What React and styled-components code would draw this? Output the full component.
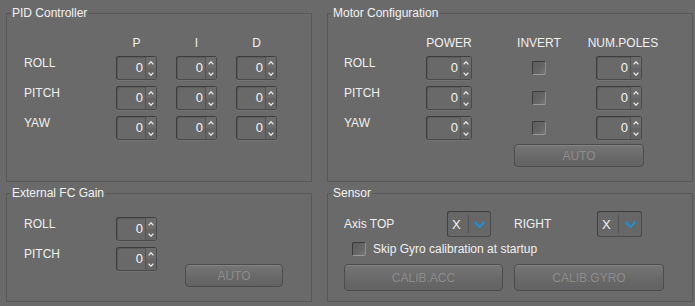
import React from "react";
import styled, { createGlobalStyle } from "styled-components";

const GlobalStyle = createGlobalStyle`
  html, body {
    margin: 0;
    padding: 0;
    background: #6a6a6a;
  }
  body {
    font-family: "Liberation Sans", Arial, sans-serif;
    font-size: 12px;
    color: #f0f0f0;
  }
`;

const Page = styled.div`
  display: grid;
  grid-template-columns: 306px 366px;
  grid-template-rows: 176px 116px;
  column-gap: 15px;
  row-gap: 4px;
  box-sizing: border-box;
  width: 695px;
  height: 306px;
  padding: 6px 0 0 6px;
  background: #6a6a6a;
`;

const Group = styled.fieldset`
  box-sizing: border-box;
  min-width: 0;
  height: 100%;
  margin: 0;
  padding: 0;
  border: 1px solid #585858;
`;

const Legend = styled.legend`
  margin-left: 4px;
  padding: 0 1px;
  font-size: 12px;
  line-height: 14px;
  color: #f2f2f2;
`;

const FormGrid = styled.div`
  display: grid;
  grid-template-columns: ${(p) => p.$columns};
  grid-auto-rows: 24px;
  grid-template-rows: ${(p) => (p.$header ? "14px" : "24px")};
  row-gap: 6px;
  padding: ${(p) => p.$pad};
`;

const RowLabel = styled.div`
  grid-column: 1;
  align-self: start;
  line-height: 14px;
  color: #f0f0f0;
`;

const ColHeader = styled.div`
  grid-column: ${(p) => p.$col};
  justify-self: center;
  line-height: 14px;
  white-space: nowrap;
  color: #f0f0f0;
`;

const Cell = styled.div`
  grid-column: ${(p) => p.$col};
  display: flex;
  align-items: center;
  justify-content: ${(p) => (p.$center ? "center" : "flex-start")};
`;

const SpinFrame = styled.div`
  box-sizing: border-box;
  display: flex;
  width: ${(p) => p.$width}px;
  height: 24px;
  border: 1px solid #3e3e3e;
  border-right-color: #4a4a4a;
  border-bottom-color: #4a4a4a;
  border-radius: 3px;
  background: #696969;
  box-shadow: inset 1px 1px 0 rgba(0, 0, 0, 0.12), 0 1px 0 rgba(255, 255, 255, 0.06);
`;

const SpinValue = styled.div`
  flex: 1;
  padding-right: 2px;
  line-height: 22px;
  text-align: right;
  font-size: 13px;
  color: #f4f4f4;
`;

const SpinArrows = styled.div`
  display: flex;
  flex-direction: column;
  width: 10px;
  border-left: 1px solid #555;
`;

const SpinArrow = styled.div`
  flex: 1;
  display: flex;
  align-items: center;
  justify-content: center;
  background: ${(p) => (p.$down ? "#656565" : "#6c6c6c")};
`;

const Chevron = ({ up, color = "#e8e8e8", w = 6, h = 4, sw = 1.3 }) => (
  <svg width={w} height={h} viewBox={`0 0 ${w} ${h}`}>
    <polyline
      points={
        up
          ? `0.6,${h - 0.6} ${w / 2},0.8 ${w - 0.6},${h - 0.6}`
          : `0.6,0.6 ${w / 2},${h - 0.8} ${w - 0.6},0.6`
      }
      fill="none"
      stroke={color}
      strokeWidth={sw}
    />
  </svg>
);

const SpinBox = ({ value = 0, width = 41 }) => (
  <SpinFrame $width={width}>
    <SpinValue>{value}</SpinValue>
    <SpinArrows>
      <SpinArrow>
        <Chevron up />
      </SpinArrow>
      <SpinArrow $down>
        <Chevron />
      </SpinArrow>
    </SpinArrows>
  </SpinFrame>
);

const CheckBox = styled.div`
  box-sizing: border-box;
  width: 14px;
  height: 14px;
  border: 1px solid #3c3c3c;
  border-right-color: #8e8e8e;
  border-bottom-color: #9a9a9a;
  border-radius: 2px;
  background: linear-gradient(135deg, #5e5e5e 0%, #666 60%, #777 100%);
`;

const Button = styled.div`
  box-sizing: border-box;
  display: flex;
  align-items: center;
  justify-content: center;
  width: ${(p) => p.$width}px;
  height: ${(p) => p.$height || 23}px;
  margin-top: ${(p) => p.$top || 0}px;
  border: 1px solid #4c4c4c;
  border-radius: 4px;
  background: linear-gradient(#767676, #686868 60%, #636363);
  box-shadow: inset 0 1px 0 rgba(255, 255, 255, 0.1);
  color: #8c8c8c;
  font-size: 12px;
`;

const GridButton = styled(Button)`
  grid-column: ${(p) => p.$col};
  grid-row: ${(p) => p.$row};
  align-self: start;
`;

const SensorBody = styled.div`
  display: flex;
  flex-direction: column;
  padding: 11px 0 0 16px;
`;

const AxisRow = styled.div`
  display: flex;
  align-items: center;
  height: 26px;
`;

const AxisLabel = styled.div`
  width: ${(p) => p.$width}px;
  margin-left: ${(p) => p.$left || 0}px;
  color: #f0f0f0;
`;

const Combo = styled.div`
  box-sizing: border-box;
  display: flex;
  align-items: center;
  width: ${(p) => p.$width}px;
  height: 26px;
  border: 1px solid #3e3e3e;
  border-right-color: #4a4a4a;
  border-bottom-color: #4a4a4a;
  border-radius: 3px;
  background: #676767;
`;

const ComboText = styled.div`
  width: 16px;
  padding-left: 4px;
  font-size: 13px;
  color: #f4f4f4;
`;

const ComboArrow = styled.div`
  flex: 1;
  display: flex;
  align-items: center;
  justify-content: center;
  height: 18px;
  border-left: 1px solid #525252;
`;

const CheckRow = styled.div`
  display: flex;
  align-items: center;
  gap: 7px;
  height: 14px;
  margin-top: 5px;
  padding-left: 8px;
  color: #f0f0f0;
`;

const ButtonRow = styled.div`
  display: flex;
  gap: 11px;
  margin-top: 8px;
`;

const ComboBox = ({ value, width }) => (
  <Combo $width={width}>
    <ComboText>{value}</ComboText>
    <ComboArrow>
      <Chevron color="#1e8fd6" w={11} h={7} sw={2} />
    </ComboArrow>
  </Combo>
);

const axes = ["ROLL", "PITCH", "YAW"];

const MOTOR_COLS = "82px 46px 42px 50px 32px 54px";

export default function App() {
  return (
    <>
      <GlobalStyle />
      <Page>
        <Group>
          <Legend>PID Controller</Legend>
          <FormGrid $columns="92px 41px 19px 41px 19px 41px" $header $pad="16px 0 0 17px">
            <ColHeader $col={2}>P</ColHeader>
            <ColHeader $col={4}>I</ColHeader>
            <ColHeader $col={6}>D</ColHeader>
            {axes.map((axis) => (
              <React.Fragment key={axis}>
                <RowLabel>{axis}</RowLabel>
                <Cell $col={2}>
                  <SpinBox />
                </Cell>
                <Cell $col={4}>
                  <SpinBox />
                </Cell>
                <Cell $col={6}>
                  <SpinBox />
                </Cell>
              </React.Fragment>
            ))}
          </FormGrid>
        </Group>

        <Group>
          <Legend>Motor Configuration</Legend>
          <FormGrid $columns={MOTOR_COLS} $header $pad="16px 0 0 16px">
            <ColHeader $col={2}>POWER</ColHeader>
            <ColHeader $col={4}>INVERT</ColHeader>
            <ColHeader $col={6}>NUM.POLES</ColHeader>
            {axes.map((axis) => (
              <React.Fragment key={axis}>
                <RowLabel>{axis}</RowLabel>
                <Cell $col={2}>
                  <SpinBox width={46} />
                </Cell>
                <Cell $col={4} $center>
                  <CheckBox />
                </Cell>
                <Cell $col={6}>
                  <SpinBox width={46} />
                </Cell>
              </React.Fragment>
            ))}
            <GridButton $col="4 / 7" $row={5} $width={130} $top={-2}>
              AUTO
            </GridButton>
          </FormGrid>
        </Group>

        <Group>
          <Legend>External FC Gain</Legend>
          <FormGrid $columns="92px 41px 28px 98px" $pad="17px 0 0 17px">
            <RowLabel>ROLL</RowLabel>
            <Cell $col={2}>
              <SpinBox />
            </Cell>
            <RowLabel>PITCH</RowLabel>
            <Cell $col={2}>
              <SpinBox />
            </Cell>
            <GridButton $col={4} $row={2} $width={98} $top={17}>
              AUTO
            </GridButton>
          </FormGrid>
        </Group>

        <Group>
          <Legend>Sensor</Legend>
          <SensorBody>
            <AxisRow>
              <AxisLabel $width={103}>Axis TOP</AxisLabel>
              <ComboBox value="X" width={44} />
              <AxisLabel $width={83} $left={23}>
                RIGHT
              </AxisLabel>
              <ComboBox value="X" width={45} />
            </AxisRow>
            <CheckRow>
              <CheckBox />
              Skip Gyro calibration at startup
            </CheckRow>
            <ButtonRow>
              <Button $width={159} $height={27}>
                CALIB.ACC
              </Button>
              <Button $width={150} $height={27}>
                CALIB.GYRO
              </Button>
            </ButtonRow>
          </SensorBody>
        </Group>
      </Page>
    </>
  );
}
